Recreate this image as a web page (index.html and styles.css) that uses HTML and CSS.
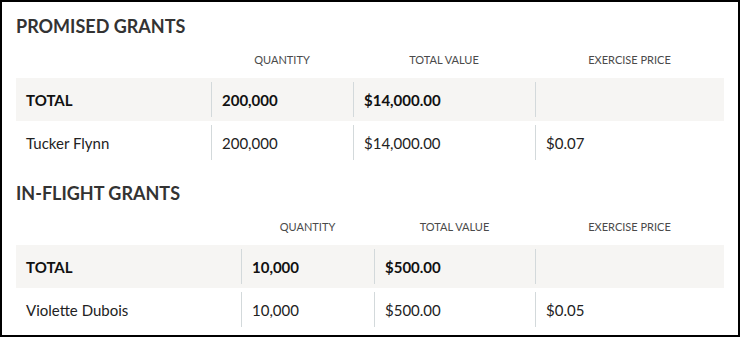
FILE: index.html
```html
<!DOCTYPE html>
<html lang="en">
<head>
<meta charset="utf-8">
<title>Grants</title>
<link rel="stylesheet" href="styles.css">
</head>
<body>
<div class="frame">
  <section class="section">
    <h2 class="section-title">PROMISED GRANTS</h2>
    <div class="grid promised">
      <div class="head"></div>
      <div class="head">QUANTITY</div>
      <div class="head">TOTAL VALUE</div>
      <div class="head">EXERCISE PRICE</div>
      <div class="row total">
        <div class="cell first">TOTAL</div>
        <div class="cell">200,000</div>
        <div class="cell">$14,000.00</div>
        <div class="cell"></div>
      </div>
      <div class="row">
        <div class="cell first">Tucker Flynn</div>
        <div class="cell">200,000</div>
        <div class="cell">$14,000.00</div>
        <div class="cell">$0.07</div>
      </div>
    </div>
  </section>
  <section class="section">
    <h2 class="section-title">IN-FLIGHT GRANTS</h2>
    <div class="grid inflight">
      <div class="head"></div>
      <div class="head">QUANTITY</div>
      <div class="head">TOTAL VALUE</div>
      <div class="head">EXERCISE PRICE</div>
      <div class="row total">
        <div class="cell first">TOTAL</div>
        <div class="cell">10,000</div>
        <div class="cell">$500.00</div>
        <div class="cell"></div>
      </div>
      <div class="row">
        <div class="cell first">Violette Dubois</div>
        <div class="cell">10,000</div>
        <div class="cell">$500.00</div>
        <div class="cell">$0.05</div>
      </div>
    </div>
  </section>
</div>
</body>
</html>
```

FILE: styles.css
```css
html, body {
  margin: 0;
  padding: 0;
  background: #fff;
}
.frame {
  box-sizing: border-box;
  width: 740px;
  height: 337px;
  border: 2px solid #000;
  padding: 0 14px;
  font-family: "Lato", "Liberation Sans", sans-serif;
  color: #222;
}
.section-title {
  margin: 13px 0 0;
  font-size: 18px;
  line-height: 22px;
  font-weight: 700;
  color: #333;
}
.section + .section .section-title {
  margin-top: 18px;
}
.grid {
  display: grid;
}
.promised {
  grid-template-columns: 195px 142px 182px 189px;
}
.inflight {
  grid-template-columns: 225px 133px 161px 189px;
}
.head {
  margin-top: 16px;
  padding-bottom: 11px;
  font-size: 11px;
  line-height: 14px;
  color: #4a4a4a;
  text-align: center;
}
.row {
  display: grid;
  grid-column: 1 / -1;
  grid-template-columns: subgrid;
  height: 43px;
}
.row.total {
  background: #f6f5f3;
  font-weight: 700;
  color: #111;
}
.cell {
  display: flex;
  align-items: center;
  margin: 4px 0;
  padding-left: 10px;
  border-left: 1px solid #d3d9db;
  font-size: 15px;
}
.cell.first {
  border-left: none;
  padding-left: 10px;
}
```
